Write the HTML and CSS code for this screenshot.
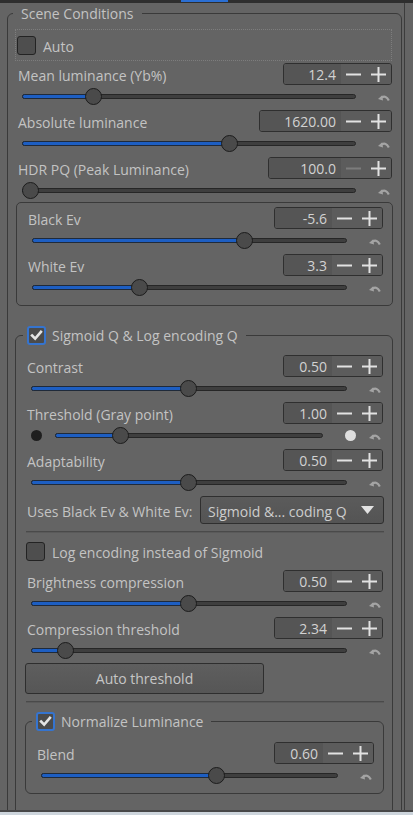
FILE: index.html
```html
<!DOCTYPE html>
<html>
<head>
<meta charset="utf-8">
<link rel="stylesheet" href="styles.css">
</head>
<body>
<div class="screen">
  <div class="topbar"><span class="tab-active"></span></div>
  <div class="main">
    <fieldset class="frame scene">
      <legend class="title">Scene Conditions</legend>
      <div class="scene-body">
        <div class="auto"><span class="cb"></span><span class="lbl">Auto</span></div>

        <div class="ctl">
          <div class="row"><span class="lbl">Mean luminance (Yb%)</span>
            <div class="spin w109"><span class="val">12.4</span><span class="btns"><span class="pm"><svg width="15" height="15" viewBox="0 0 15 15"><path d="M0 7.5H15"/></svg></span><span class="pm"><svg width="15" height="15" viewBox="0 0 15 15"><path d="M0 7.5H15M7.5 0V15"/></svg></span></span></div>
          </div>
          <div class="slide" style="--v:.201"><div class="track"><div class="fill"></div><div class="thumb"></div></div><span class="reset"><svg width="12" height="8" viewBox="0 0 12 8"><path class="rh" d="M0 5L4.2 1.2L5 6.5Z"/><path class="ra" d="M3.5 3.6Q8 0.8 10.8 6.5"/></svg></span></div>
        </div>

        <div class="ctl">
          <div class="row"><span class="lbl">Absolute luminance</span>
            <div class="spin w133"><span class="val">1620.00</span><span class="btns"><span class="pm"><svg width="15" height="15" viewBox="0 0 15 15"><path d="M0 7.5H15"/></svg></span><span class="pm"><svg width="15" height="15" viewBox="0 0 15 15"><path d="M0 7.5H15M7.5 0V15"/></svg></span></span></div>
          </div>
          <div class="slide" style="--v:.631"><div class="track"><div class="fill"></div><div class="thumb"></div></div><span class="reset"><svg width="12" height="8" viewBox="0 0 12 8"><path class="rh" d="M0 5L4.2 1.2L5 6.5Z"/><path class="ra" d="M3.5 3.6Q8 0.8 10.8 6.5"/></svg></span></div>
        </div>

        <div class="ctl">
          <div class="row"><span class="lbl">HDR PQ (Peak Luminance)</span>
            <div class="spin w124"><span class="val">100.0</span><span class="btns"><span class="pm dim"><svg width="15" height="15" viewBox="0 0 15 15"><path d="M0 7.5H15"/></svg></span><span class="pm"><svg width="15" height="15" viewBox="0 0 15 15"><path d="M0 7.5H15M7.5 0V15"/></svg></span></span></div>
          </div>
          <div class="slide" style="--v:0"><div class="track"><div class="fill"></div><div class="thumb"></div></div><span class="reset"><svg width="12" height="8" viewBox="0 0 12 8"><path class="rh" d="M0 5L4.2 1.2L5 6.5Z"/><path class="ra" d="M3.5 3.6Q8 0.8 10.8 6.5"/></svg></span></div>
        </div>

        <div class="sub ev">
          <div class="ctl">
            <div class="row"><span class="lbl">Black Ev</span>
              <div class="spin w109"><span class="val">-5.6</span><span class="btns"><span class="pm"><svg width="15" height="15" viewBox="0 0 15 15"><path d="M0 7.5H15"/></svg></span><span class="pm"><svg width="15" height="15" viewBox="0 0 15 15"><path d="M0 7.5H15M7.5 0V15"/></svg></span></span></div>
            </div>
            <div class="slide" style="--v:.689"><div class="track"><div class="fill"></div><div class="thumb"></div></div><span class="reset"><svg width="12" height="8" viewBox="0 0 12 8"><path class="rh" d="M0 5L4.2 1.2L5 6.5Z"/><path class="ra" d="M3.5 3.6Q8 0.8 10.8 6.5"/></svg></span></div>
          </div>
          <div class="ctl">
            <div class="row"><span class="lbl">White Ev</span>
              <div class="spin w100"><span class="val">3.3</span><span class="btns"><span class="pm"><svg width="15" height="15" viewBox="0 0 15 15"><path d="M0 7.5H15"/></svg></span><span class="pm"><svg width="15" height="15" viewBox="0 0 15 15"><path d="M0 7.5H15M7.5 0V15"/></svg></span></span></div>
            </div>
            <div class="slide" style="--v:.335"><div class="track"><div class="fill"></div><div class="thumb"></div></div><span class="reset"><svg width="12" height="8" viewBox="0 0 12 8"><path class="rh" d="M0 5L4.2 1.2L5 6.5Z"/><path class="ra" d="M3.5 3.6Q8 0.8 10.8 6.5"/></svg></span></div>
          </div>
        </div>

        <fieldset class="frame sigmoid">
          <legend class="ctitle"><span class="cb on"><svg width="17" height="17" viewBox="0 0 17 17"><path d="M3.5 8.5L7 12L13.5 4.5"/></svg></span><span class="lbl">Sigmoid Q &amp; Log encoding Q</span></legend>
          <div class="sig-body">
            <div class="ctl">
              <div class="row"><span class="lbl">Contrast</span>
                <div class="spin w100"><span class="val">0.50</span><span class="btns"><span class="pm"><svg width="15" height="15" viewBox="0 0 15 15"><path d="M0 7.5H15"/></svg></span><span class="pm"><svg width="15" height="15" viewBox="0 0 15 15"><path d="M0 7.5H15M7.5 0V15"/></svg></span></span></div>
              </div>
              <div class="slide" style="--v:.5"><div class="track"><div class="fill"></div><div class="thumb"></div></div><span class="reset"><svg width="12" height="8" viewBox="0 0 12 8"><path class="rh" d="M0 5L4.2 1.2L5 6.5Z"/><path class="ra" d="M3.5 3.6Q8 0.8 10.8 6.5"/></svg></span></div>
            </div>

            <div class="ctl">
              <div class="row"><span class="lbl">Threshold (Gray point)</span>
                <div class="spin w100"><span class="val">1.00</span><span class="btns"><span class="pm"><svg width="15" height="15" viewBox="0 0 15 15"><path d="M0 7.5H15"/></svg></span><span class="pm"><svg width="15" height="15" viewBox="0 0 15 15"><path d="M0 7.5H15M7.5 0V15"/></svg></span></span></div>
              </div>
              <div class="slide thr" style="--v:.23"><span class="dot dark"></span><div class="track"><div class="fill"></div><div class="thumb"></div></div><span class="dot light"></span><span class="reset"><svg width="12" height="8" viewBox="0 0 12 8"><path class="rh" d="M0 5L4.2 1.2L5 6.5Z"/><path class="ra" d="M3.5 3.6Q8 0.8 10.8 6.5"/></svg></span></div>
            </div>

            <div class="ctl">
              <div class="row"><span class="lbl">Adaptability</span>
                <div class="spin w100"><span class="val">0.50</span><span class="btns"><span class="pm"><svg width="15" height="15" viewBox="0 0 15 15"><path d="M0 7.5H15"/></svg></span><span class="pm"><svg width="15" height="15" viewBox="0 0 15 15"><path d="M0 7.5H15M7.5 0V15"/></svg></span></span></div>
              </div>
              <div class="slide" style="--v:.5"><div class="track"><div class="fill"></div><div class="thumb"></div></div><span class="reset"><svg width="12" height="8" viewBox="0 0 12 8"><path class="rh" d="M0 5L4.2 1.2L5 6.5Z"/><path class="ra" d="M3.5 3.6Q8 0.8 10.8 6.5"/></svg></span></div>
            </div>

            <div class="combo-row">
              <span class="lbl">Uses Black Ev &amp; White Ev:</span>
              <div class="combo"><span class="lbl">Sigmoid &amp;... coding Q</span><svg width="13" height="8" viewBox="0 0 13 8"><path d="M0 0H13L6.5 8Z"/></svg></div>
            </div>

            <div class="sep"></div>

            <div class="check-row"><span class="cb"></span><span class="lbl">Log encoding instead of Sigmoid</span></div>

            <div class="ctl first-after">
              <div class="row"><span class="lbl">Brightness compression</span>
                <div class="spin w100"><span class="val">0.50</span><span class="btns"><span class="pm"><svg width="15" height="15" viewBox="0 0 15 15"><path d="M0 7.5H15"/></svg></span><span class="pm"><svg width="15" height="15" viewBox="0 0 15 15"><path d="M0 7.5H15M7.5 0V15"/></svg></span></span></div>
              </div>
              <div class="slide" style="--v:.5"><div class="track"><div class="fill"></div><div class="thumb"></div></div><span class="reset"><svg width="12" height="8" viewBox="0 0 12 8"><path class="rh" d="M0 5L4.2 1.2L5 6.5Z"/><path class="ra" d="M3.5 3.6Q8 0.8 10.8 6.5"/></svg></span></div>
            </div>

            <div class="ctl">
              <div class="row"><span class="lbl">Compression threshold</span>
                <div class="spin w109"><span class="val">2.34</span><span class="btns"><span class="pm"><svg width="15" height="15" viewBox="0 0 15 15"><path d="M0 7.5H15"/></svg></span><span class="pm"><svg width="15" height="15" viewBox="0 0 15 15"><path d="M0 7.5H15M7.5 0V15"/></svg></span></span></div>
              </div>
              <div class="slide" style="--v:.089"><div class="track"><div class="fill"></div><div class="thumb"></div></div><span class="reset"><svg width="12" height="8" viewBox="0 0 12 8"><path class="rh" d="M0 5L4.2 1.2L5 6.5Z"/><path class="ra" d="M3.5 3.6Q8 0.8 10.8 6.5"/></svg></span></div>
            </div>

            <button class="btn"><span class="lbl">Auto threshold</span></button>

            <div class="sep sep2"></div>

            <fieldset class="frame norm">
              <legend class="ctitle"><span class="cb on"><svg width="17" height="17" viewBox="0 0 17 17"><path d="M3.5 8.5L7 12L13.5 4.5"/></svg></span><span class="lbl">Normalize Luminance</span></legend>
              <div class="norm-body">
                <div class="ctl">
                  <div class="row"><span class="lbl">Blend</span>
                    <div class="spin w100"><span class="val">0.60</span><span class="btns"><span class="pm"><svg width="15" height="15" viewBox="0 0 15 15"><path d="M0 7.5H15"/></svg></span><span class="pm"><svg width="15" height="15" viewBox="0 0 15 15"><path d="M0 7.5H15M7.5 0V15"/></svg></span></span></div>
                  </div>
                  <div class="slide" style="--v:.602"><div class="track"><div class="fill"></div><div class="thumb"></div></div><span class="reset"><svg width="12" height="8" viewBox="0 0 12 8"><path class="rh" d="M0 5L4.2 1.2L5 6.5Z"/><path class="ra" d="M3.5 3.6Q8 0.8 10.8 6.5"/></svg></span></div>
                </div>
              </div>
            </fieldset>
          </div>
        </fieldset>
      </div>
    </fieldset>
    <div class="rail"></div>
  </div>
  <div class="bottom"></div>
</div>
</body>
</html>
```

FILE: styles.css
```css
* { box-sizing: border-box; }
html, body { margin: 0; padding: 0; }
body {
  background: #646464;
  font-family: "Open Sans", "Noto Sans", sans-serif;
  font-size: 14px;
  color: #c3c3c3;
}
.screen {
  width: 413px;
  height: 815px;
  display: flex;
  flex-direction: column;
  overflow: hidden;
}
.topbar {
  height: 3px;
  flex: none;
  display: flex;
  background: #2e2e2e;
}
.tab-active {
  margin-left: 181px;
  width: 47px;
  height: 2px;
  background: #2b6fd3;
}
.main {
  flex: 1;
  min-height: 0;
  overflow: hidden;
  display: flex;
  align-items: flex-start;
}
.bottom {
  height: 5px;
  flex: none;
  border-top: 2px solid #474747;
  background: #cdd5dc;
}

/* labels sit one pixel lower than box centre, as in the GTK theme */
.lbl {
  white-space: nowrap;
  padding-top: 2px;
}

/* frames */
fieldset.frame {
  margin: 0;
  padding: 0;
  min-width: 0;
  border: 1px solid #3a3a3a;
  border-radius: 6px;
}
fieldset.frame > legend {
  padding: 0;
  line-height: 20px;
  height: 20px;
}
.scene {
  margin-left: 7px !important;
  width: 395px;
  flex: none;
}
.title {
  margin-left: 5px;
  padding: 1px 9px 0 8px !important;
}
.ctitle {
  display: flex;
  align-items: center;
  gap: 6px;
  margin-left: 7px;
  padding: 0 8px 0 4px !important;
}
.scene-body {
  display: flex;
  flex-direction: column;
  padding: 0 8px 60px 7px;
}
.rail {
  flex: none;
  width: 1px;
  height: 100%;
  margin-left: 2px;
  background: #3c3c3c;
}

/* auto row */
.auto {
  margin-top: 6px;
  margin-right: 1px;
  height: 32px;
  border: 1px dotted #7d7d7d;
  display: flex;
  align-items: center;
  gap: 7px;
  padding-left: 1px;
}

/* checkbox */
.cb {
  flex: none;
  width: 19px;
  height: 19px;
  border: 1px solid #232323;
  border-radius: 3px;
  background: #4e4e4e;
  display: flex;
  align-items: center;
  justify-content: center;
}
.cb.on {
  border: 2px solid #3574cf;
  background: #4b4b4b;
}
.cb.on svg path {
  fill: none;
  stroke: #e4e4e4;
  stroke-width: 3;
  stroke-linecap: square;
}

/* controls */
.ctl {
  display: flex;
  flex-direction: column;
  margin-top: 2px;
}
.scene-body > .ctl { padding: 0 1px 0 3px; }
.row {
  height: 22px;
  display: flex;
  align-items: center;
  justify-content: space-between;
}

.spin {
  height: 22px;
  display: flex;
  border: 1px solid #2f2f2f;
  border-radius: 3px;
  overflow: hidden;
  color: #d2d2d2;
}
.w100 { width: 100px; }
.w109 { width: 109px; }
.w124 { width: 124px; }
.w133 { width: 133px; }
.val {
  flex: 1;
  background: #555555;
  text-align: right;
  padding: 1px 5px 0 0;
  line-height: 20px;
}
.btns {
  flex: none;
  width: 50px;
  display: flex;
  background: #5c5c5c;
}
.pm {
  width: 25px;
  display: flex;
  align-items: center;
  justify-content: center;
}
.pm svg path {
  stroke: #e2e2e2;
  stroke-width: 2;
}
.pm.dim svg path { stroke: #7c7c7c; }

/* slider */
.slide {
  height: 23px;
  display: flex;
  align-items: center;
  padding-left: 4px;
}
.track {
  flex: 1;
  position: relative;
  height: 5px;
  border: 1px solid #262626;
  border-radius: 3px;
  background: #3e3e3e;
}
.fill {
  position: absolute;
  left: -1px;
  top: -1px;
  bottom: -1px;
  width: calc(var(--v) * (100% - 17px) + 9px);
  background: #1d5ec2;
  border: 1px solid #1f2a3a;
  border-radius: 3px;
}
.thumb {
  position: absolute;
  top: 50%;
  left: calc(var(--v) * (100% - 17px) - 1px);
  width: 17px;
  height: 17px;
  margin-top: -8.5px;
  border-radius: 50%;
  background: #4a4a4a;
  border: 1.5px solid #1c1c1c;
}
.reset {
  flex: none;
  width: 36px;
  display: flex;
  justify-content: flex-end;
  padding-right: 2px;
  padding-top: 2px;
}
.reset .rh { fill: #a4a4a4; }
.reset .ra { fill: none; stroke: #a4a4a4; stroke-width: 2.2; }

.thr .dot {
  flex: none;
  width: 11px;
  height: 11px;
  border-radius: 50%;
}
.thr .dot.dark { background: #1f1f1f; margin-right: 13px; }
.thr .dot.light { background: #dedede; margin-left: 22px; }
.thr .reset { width: 27px; }

/* sub frame */
.sub {
  margin-left: 1px;
  border: 1px solid #3a3a3a;
  border-radius: 5px;
  padding: 4px 9px 6px 11px;
  display: flex;
  flex-direction: column;
}
.sub > .ctl:first-child { margin-top: 0; }

/* sigmoid */
.sigmoid { margin-top: 19px !important; }
.sig-body {
  display: flex;
  flex-direction: column;
  padding: 10px 8px 80px 9px;
}
.sig-body > .ctl { padding: 0 1px 0 2px; }
.sig-body > .ctl:first-child { margin-top: 0; }

.combo-row {
  margin-top: 2px;
  height: 28px;
  display: flex;
  align-items: center;
  justify-content: space-between;
  padding-left: 2px;
}
.combo {
  width: 184px;
  height: 28px;
  border: 1px solid #2f2f2f;
  border-radius: 3px;
  background: linear-gradient(#5b5b5b, #545454);
  display: flex;
  align-items: center;
  justify-content: space-between;
  padding: 0 9px 0 7px;
  color: #cdcdcd;
  white-space: nowrap;
}
.combo svg path { fill: #e2e2e2; }

.sep {
  margin-top: 7px;
  margin-left: 1px;
  height: 2px;
  border-top: 1px solid #4a4a4a;
  border-bottom: 1px solid #5a5a5a;
}
.sep2 { margin-top: 7px; }

.check-row {
  margin-top: 9px;
  height: 19px;
  display: flex;
  align-items: center;
  gap: 7px;
  padding-left: 1px;
}
.sig-body > .first-after { margin-top: 9px; }

.btn {
  margin: 1px 0 0 0;
  width: 239px;
  height: 31px;
  border: 1px solid #2e2e2e;
  border-radius: 3px;
  background: linear-gradient(#5e5e5e, #565656);
  color: #c6c6c6;
  font-family: inherit;
  font-size: 14px;
  padding: 0;
}

.norm { margin-top: 8px !important; }
.norm .ctitle { margin-left: 6px; }
.norm-body {
  display: flex;
  flex-direction: column;
  padding: 11px 9px 6px 11px;
}
.norm-body > .ctl { margin-top: 0; }
```
